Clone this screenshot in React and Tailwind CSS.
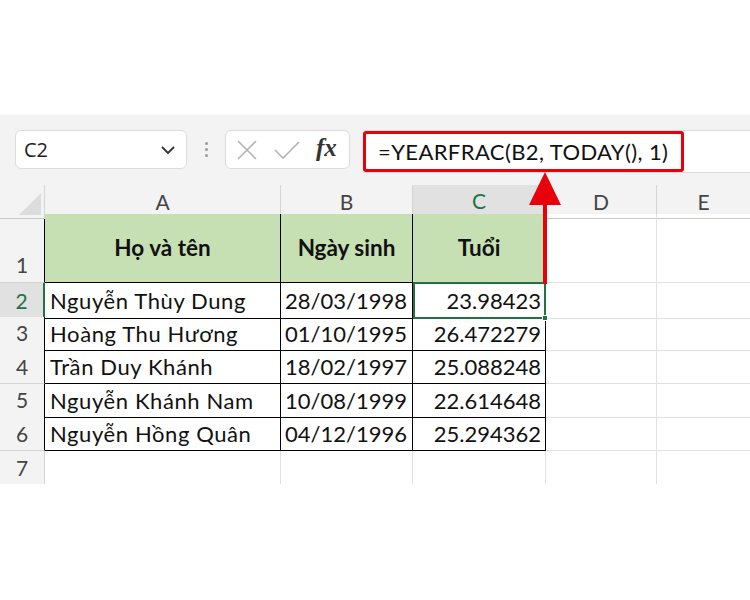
import React from 'react';

const cols = 'grid grid-cols-[45px_236px_132px_133px_111px_1fr]';
const cellFont = { fontFamily: 'Lato, "Noto Sans", sans-serif' };

const rows = [
  ['Nguyễn Thùy Dung', '28/03/1998', '23.98423'],
  ['Hoàng Thu Hương', '01/10/1995', '26.472279'],
  ['Trần Duy Khánh', '18/02/1997', '25.088248'],
  ['Nguyễn Khánh Nam', '10/08/1999', '22.614648'],
  ['Nguyễn Hồng Quân', '04/12/1996', '25.294362'],
];

const Toolbar = () => (
  <div className="h-[70px] bg-[#f3f3f3] flex items-start pt-[15px] pl-[15px] gap-0 font-['Open_Sans',sans-serif]">
    <div className="w-[172px] h-[39px] bg-white border border-[#dcdcdc] rounded-md flex items-center justify-between pl-[8px] pr-[10px]">
      <span className="text-[20px] text-[#222]">C2</span>
      <svg width="16" height="10" viewBox="0 0 16 10"><path d="M2 2l6 6 6-6" fill="none" stroke="#333" strokeWidth="1.8" /></svg>
    </div>
    <div className="w-[38px] h-[39px] flex flex-col items-center justify-center gap-[3px]">
      <span className="w-[3px] h-[3px] rounded-full bg-[#9a9a9a]" />
      <span className="w-[3px] h-[3px] rounded-full bg-[#9a9a9a]" />
      <span className="w-[3px] h-[3px] rounded-full bg-[#9a9a9a]" />
    </div>
    <div className="w-[125px] h-[39px] bg-white border border-[#dcdcdc] rounded-md flex items-center px-[10px] gap-[16px]">
      <svg width="22" height="22" viewBox="0 0 22 22"><path d="M2 2l18 18M20 2L2 20" stroke="#b4b4b4" strokeWidth="1.6" /></svg>
      <svg width="26" height="20" viewBox="0 0 26 20"><path d="M1 10l8 8L25 2" fill="none" stroke="#b4b4b4" strokeWidth="1.6" /></svg>
      <span className="text-[25px] italic font-bold text-[#333] leading-none font-['Liberation_Serif',serif] -mt-[4px]">fx</span>
    </div>
    <div className="ml-[13px] flex-1 h-[43px] bg-white border-y border-[#dcdcdc] flex items-stretch">
      <div className="w-[321px] border-[3px] border-[#e8000b] rounded-[3px] flex items-center pl-[12px]">
        <span className="text-[22px] text-[#111] tracking-[0.4px] font-['Lato',sans-serif]">=YEARFRAC(B2, TODAY(), 1)</span>
      </div>
    </div>
  </div>
);

const ColHeader = () => (
  <div className={`${cols} h-[29px] bg-[#f3f3f3] text-[21px] text-[#444]`} style={cellFont}>
    <div className="border-r border-[#d4d4d4] border-b border-b-[#c8c8c8] relative">
      <svg className="absolute right-[3px] bottom-[3px]" width="22" height="22" viewBox="0 0 22 22"><path d="M22 0V22H0Z" fill="#dcdcdc" /></svg>
    </div>
    <div className="border-r border-[#d4d4d4] border-b border-b-black flex items-center justify-center">A</div>
    <div className="border-r border-[#d4d4d4] border-b border-b-black flex items-center justify-center">B</div>
    <div className="bg-[#e1e1e1] border-r border-[#d4d4d4] border-b-2 border-b-[#217346] flex items-center justify-center text-[#217346]">C</div>
    <div className="border-r border-[#d4d4d4] border-b border-b-[#c8c8c8] flex items-center justify-center">D</div>
    <div className="border-b border-[#c8c8c8] flex items-center justify-center">E</div>
  </div>
);

export default function App() {
  return (
    <div className="w-[750px] h-[600px] bg-white overflow-hidden relative" style={cellFont}>
      <div className="h-[115px]" />
      <Toolbar />
      <ColHeader />

      <div className={`${cols} h-[69px] text-[22.5px]`}>
        <div className="bg-[#f3f3f3] border-r border-r-black border-b border-b-[#d4d4d4] flex items-end justify-center pb-[2px] text-[#444] font-normal text-[21px]">1</div>
        <div className="bg-[#c6e0b4] border-r border-b border-black flex items-center justify-center font-bold text-[#111]">Họ và tên</div>
        <div className="bg-[#c6e0b4] border-r border-b border-black flex items-center justify-center font-bold text-[#111]">Ngày sinh</div>
        <div className="bg-[#c6e0b4] border-r border-b border-black flex items-center justify-center font-bold text-[#111]">Tuổi</div>
        <div className="border-r border-b border-[#e1e1e1]" />
        <div className="border-b border-[#e1e1e1]" />
      </div>

      {rows.map((r, i) => (
        <div key={i} className={`${cols} h-[33.5px] text-[22px] text-[#111]`}>
          <div className={i === 0
            ? 'bg-[#e1e1e1] border-r-2 border-r-[#217346] border-b border-b-[#d4d4d4] flex items-center justify-center text-[#217346] text-[21px]'
            : 'bg-[#f3f3f3] border-r border-r-black border-b border-b-[#d4d4d4] flex items-center justify-center text-[#444] text-[21px]'}>{i + 2}</div>
          <div className="border-r border-b border-black flex items-center pl-[5px] whitespace-nowrap tracking-[0.6px]">{r[0]}</div>
          <div className="border-r border-b border-black flex items-center pl-[4px] whitespace-nowrap">{r[1]}</div>
          <div className={i === 0
            ? 'border-2 border-[#217346] -mt-[1px] flex items-center justify-end pr-[3px] relative'
            : 'border-r border-b border-black flex items-center justify-end pr-[4px]'}>
            {r[2]}
            {i === 0 && <span className="absolute -right-[4px] -bottom-[4px] w-[6px] h-[6px] bg-[#217346] border border-white" />}
          </div>
          <div className="border-r border-b border-[#e1e1e1]" />
          <div className="border-b border-[#e1e1e1]" />
        </div>
      ))}

      <div className={`${cols} h-[33.5px] text-[21px]`}>
        <div className="bg-[#f3f3f3] border-r border-[#d4d4d4] flex items-center justify-center text-[#444]">7</div>
        <div className="border-r border-[#e1e1e1]" />
        <div className="border-r border-[#e1e1e1]" />
        <div className="border-r border-[#e1e1e1]" />
        <div className="border-r border-[#e1e1e1]" />
        <div />
      </div>

      {/* red arrow pointing at the formula bar */}
      <svg className="absolute left-[528px] top-[172px]" width="34" height="112" viewBox="0 0 34 112">
        <path d="M17 0L33 33H1Z" fill="#e8000b" />
        <rect x="15" y="30" width="4" height="82" fill="#e8000b" />
      </svg>
    </div>
  );
}
